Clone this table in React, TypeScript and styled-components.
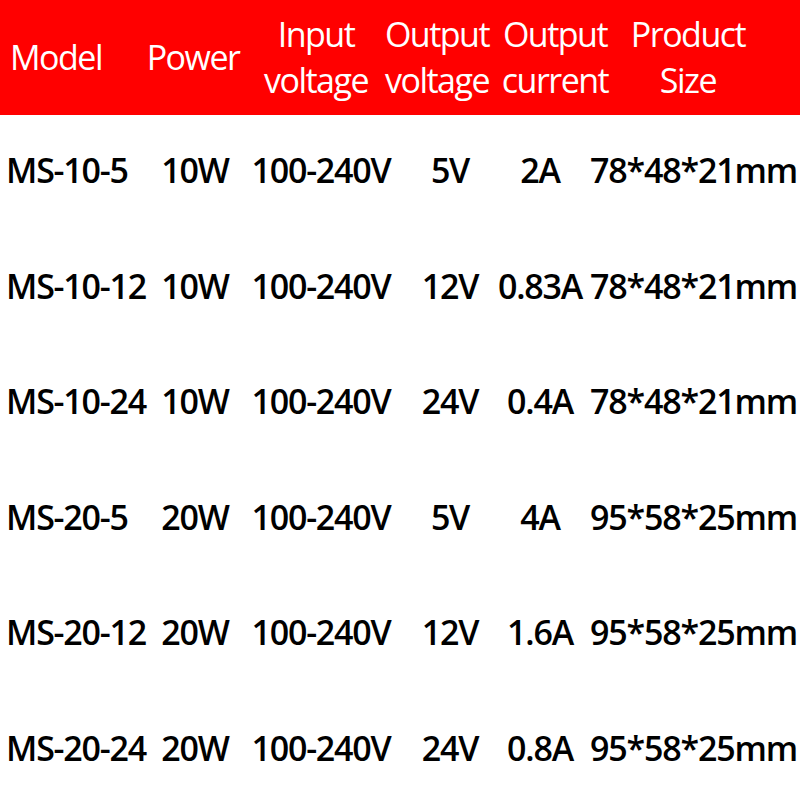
import React from "react";
import styled, {createGlobalStyle} from "styled-components";

const GlobalStyle = createGlobalStyle`
    html, body {
        margin: 0;
        padding: 0;
        background: #ffffff;
    }
    body {
        font-family: "Open Sans", "Liberation Sans", sans-serif;
    }
`

type Spec = {
    model: string
    power: string
    input: string
    outV: string
    current: string
    size: string
}

const rows: Spec[] = [
    {model: 'MS-10-5', power: '10W', input: '100-240V', outV: '5V', current: '2A', size: '78*48*21mm'},
    {model: 'MS-10-12', power: '10W', input: '100-240V', outV: '12V', current: '0.83A', size: '78*48*21mm'},
    {model: 'MS-10-24', power: '10W', input: '100-240V', outV: '24V', current: '0.4A', size: '78*48*21mm'},
    {model: 'MS-20-5', power: '20W', input: '100-240V', outV: '5V', current: '4A', size: '95*58*25mm'},
    {model: 'MS-20-12', power: '20W', input: '100-240V', outV: '12V', current: '1.6A', size: '95*58*25mm'},
    {model: 'MS-20-24', power: '20W', input: '100-240V', outV: '24V', current: '0.8A', size: '95*58*25mm'},
]

const headers: string[][] = [
    ['Model'],
    ['Power'],
    ['Input', 'voltage'],
    ['Output', 'voltage'],
    ['Output', 'current'],
    ['Product', 'Size'],
]

const App: React.FC = () => {
    return (
        <Page>
            <GlobalStyle/>
            <Header>
                {headers.map((lines, i) => (
                    <HeadCell key={i} first={i === 0}>
                        {lines.map((l) => <HeadLine key={l}>{l}</HeadLine>)}
                    </HeadCell>
                ))}
            </Header>
            <Body>
                {rows.map((r) => (
                    <Row key={r.model}>
                        <Cell first>{r.model}</Cell>
                        <Cell>{r.power}</Cell>
                        <Cell>{r.input}</Cell>
                        <Cell>{r.outV}</Cell>
                        <Cell>{r.current}</Cell>
                        <Cell>{r.size}</Cell>
                    </Row>
                ))}
            </Body>
        </Page>
    )
}

export default App

const Page = styled.div`
    width: 800px;
    height: 800px;
    overflow: hidden;
    background: #ffffff;
    display: flex;
    flex-direction: column;
`

const Header = styled.div`
    height: 115px;
    flex-shrink: 0;
    background: #ff0000;
    display: grid;
    grid-template-columns: 130px 126px 120px 122px 114px 152px 1fr;
    align-items: center;
`

const HeadCell = styled.div<{first?: boolean}>`
    display: flex;
    flex-direction: column;
    align-items: ${(p) => p.first ? 'flex-start' : 'center'};
    padding-left: ${(p) => p.first ? '10px' : '0'};
    margin-top: -2px;
    white-space: nowrap;
`

const HeadLine = styled.span`
    color: #ffffff;
    font-size: 34px;
    line-height: 46px;
    letter-spacing: -1.5px;
    font-weight: 450;
`

const Body = styled.div`
    display: flex;
    flex-direction: column;
`

const Row = styled.div`
    height: 115.5px;
    display: grid;
    grid-template-columns: 155px 80px 172px 86px 94px 1fr;
    align-items: center;
    padding-bottom: 5px;
    box-sizing: border-box;
`

const Cell = styled.div<{first?: boolean}>`
    color: #000000;
    font-size: 34px;
    font-weight: 580;
    letter-spacing: -1.2px;
    white-space: nowrap;
    text-align: ${(p) => p.first ? 'left' : 'center'};
    padding-left: ${(p) => p.first ? '6px' : '0'};
`
